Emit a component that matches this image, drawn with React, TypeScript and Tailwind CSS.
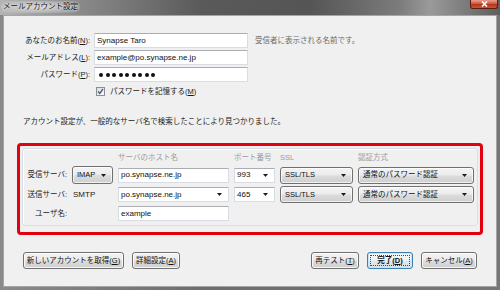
import type React from "react"

const Arrow = () => (
    <svg width="5" height="3" viewBox="0 0 5 3" className="shrink-0">
        <path d="M0 0h5L2.5 3z" fill="#1c1c1c" />
    </svg>
)

type BoxProps = {
    value: string
    w: string
    arrow?: boolean
}

// white edit box, optionally with the combo arrow on the right
const TextBox: React.FC<BoxProps> = ({ value, w, arrow }) => (
    <div className={"h-[15px] bg-white border border-[#d9dde3] border-t-[#abadb3] flex items-center justify-between pl-[2px] pr-[6px] text-[8px] text-[#111] " + w}>
        <span>{value}</span>
        {arrow && <Arrow />}
    </div>
)

type DropProps = {
    label: string
    w?: string
    h?: string
}

const Dropdown: React.FC<DropProps> = ({ label, w = "w-full", h = "h-[17px]" }) => (
    <div className={"rounded-[3px] border border-[#707070] bg-[linear-gradient(#f4f4f4,#ebebeb_48%,#dcdcdc_52%,#cfcfcf)] shadow-[inset_0_0_0_1px_rgba(255,255,255,0.7)] flex items-center justify-between pl-[4px] pr-[6px] text-[7.5px] text-[#111] " + w + " " + h}>
        <span>{label}</span>
        <Arrow />
    </div>
)

type BtnProps = {
    text: string
    keyChar: string
    w: string
    primary?: boolean
}

const Button: React.FC<BtnProps> = ({ text, keyChar, w, primary }) => (
    <div className={
        primary
            ? "h-[17px] rounded-[3px] border border-[#3c7fb1] bg-[linear-gradient(#f6f9fb,#eef3f6_48%,#e0e8ee_52%,#d6e0e7)] shadow-[inset_0_0_0_1px_#c4e6f8] p-[2px] " + w
            : "h-[17px] rounded-[3px] border border-[#707070] bg-[linear-gradient(#f2f2f2,#ebebeb_48%,#dddddd_52%,#cfcfcf)] shadow-[inset_0_0_0_1px_rgba(255,255,255,0.8)] " + w
    }>
        <div className={primary
            ? "h-full border border-dotted border-[#444] flex items-center justify-center text-[7.5px] font-bold text-[#111]"
            : "h-full flex items-center justify-center text-[7.5px] text-[#111]"}>
            {text}(<u className="underline-offset-1">{keyChar}</u>)
        </div>
    </div>
)

const FormRow: React.FC<{ label: string, keyChar: string, children: React.ReactNode, first?: boolean }> = ({ label, keyChar, children, first }) => (
    <div className={first ? "flex items-center gap-[4px] h-[15px]" : "flex items-center gap-[4px] h-[15px] mt-[2px]"}>
        <div className="w-[67px] text-right text-[7.5px] text-[#1a1a1a] whitespace-nowrap">
            {label}(<u className="underline-offset-1">{keyChar}</u>):
        </div>
        {children}
    </div>
)

const Label: React.FC<{ text: string }> = ({ text }) => (
    <div className="text-right text-[7.5px] text-[#1a1a1a] whitespace-nowrap">{text}</div>
)

const App: React.FC = () => {
    return (
        <div className="w-[500px] h-[290px] flex flex-col overflow-hidden bg-[linear-gradient(to_right,#8a8a8a,#6e6e6e_40%,#767676)] font-['Liberation_Sans','Noto_Sans_CJK_JP',sans-serif]">

            {/* title bar */}
            <div className="h-[15px] shrink-0 flex items-start justify-between bg-[linear-gradient(to_right,#b4b4b4,#8a8a8a_16%,#5a5a5a_40%,#555555_62%,#7c7c7c_80%,#9a9a9a_86%,#5e5e5e)]">
                <div className="ml-[1px] mt-[1px] px-[2px] rounded-[6px] bg-[radial-gradient(ellipse_at_center,rgba(235,235,235,0.75),rgba(235,235,235,0.2)_75%,rgba(235,235,235,0))] text-[7.5px] leading-[12px] text-[#111] [text-shadow:0_0_2px_#fff]">
                    メールアカウント設定
                </div>
                <div className="mr-[2px] w-[28px] h-[9px] rounded-b-[3px] border border-t-0 border-[#5b1d12] bg-[linear-gradient(#e3a08e,#cf5a3e_45%,#b8341a_55%,#c8553a)] flex items-center justify-center">
                    <svg width="7" height="6" viewBox="0 0 7 6">
                        <path d="M1 0.5l5 5M6 0.5l-5 5" stroke="#fff" strokeWidth="1.6" />
                    </svg>
                </div>
            </div>

            {/* client area */}
            <div className="flex-1 mx-[3px] mb-[3px] bg-[#f0f0f0] border border-[#a5a5a5] flex flex-col pl-[19px] pr-[19px] pt-[17px]">

                <FormRow label="あなたのお名前" keyChar="N" first>
                    <TextBox value="Synapse Taro" w="w-[154px]" />
                    <span className="ml-[3px] text-[7.5px] text-[#6b6b6b] whitespace-nowrap">受信者に表示される名前です。</span>
                </FormRow>
                <FormRow label="メールアドレス" keyChar="L">
                    <TextBox value="example@po.synapse.ne.jp" w="w-[154px]" />
                </FormRow>
                <FormRow label="パスワード" keyChar="P">
                    <div className="w-[154px] h-[15px] bg-white border border-[#d9dde3] border-t-[#abadb3] flex items-center gap-[2.5px] pl-[4px]">
                        {[0, 1, 2, 3, 4, 5, 6, 7, 8].map((i) => (
                            <div key={i} className="w-[4px] h-[4px] rounded-full bg-[#111]" />
                        ))}
                    </div>
                </FormRow>

                <div className="flex items-center h-[11px] mt-[4px] ml-[73px] gap-[5px]">
                    <div className="w-[9px] h-[9px] border border-[#8e8f8f] bg-[linear-gradient(135deg,#dcdcdc,#fdfdfd)] flex items-center justify-center">
                        <svg width="7" height="7" viewBox="0 0 7 7">
                            <path d="M1 3.6l1.8 1.9L6 1" fill="none" stroke="#4a5f86" strokeWidth="1.4" />
                        </svg>
                    </div>
                    <span className="text-[7.5px] text-[#1a1a1a]">パスワードを記憶する(<u className="underline-offset-1">M</u>)</span>
                </div>

                <div className="mt-[19px] h-[12px] leading-[12px] text-[7.5px] text-[#222] whitespace-nowrap">
                    アカウント設定が、一般的なサーバ名で検索したことにより見つかりました。
                </div>

                {/* server settings, marked in red */}
                <div className="mt-[15px] -ml-[6px] w-[466px] rounded-[4px] border-[3px] border-[#e3000f] pt-[2px] px-[2px] pb-[6px]">
                    <div className="rounded-[3px] border border-[#d5dfe5] shadow-[inset_1px_1px_0_#fff] pt-[1px] pb-[4px]">
                        <div className="grid grid-cols-[44px_41px_111px_41px_73px_116px] gap-x-[5px] h-[15px] items-center text-[7.5px] text-[#9a9a9a]">
                            <div />
                            <div />
                            <div>サーバのホスト名</div>
                            <div className="whitespace-nowrap">ポート番号</div>
                            <div>SSL</div>
                            <div>認証方式</div>
                        </div>
                        <div className="grid grid-cols-[44px_41px_111px_41px_73px_116px] gap-x-[5px] h-[17px] mt-[1px] items-center">
                            <Label text="受信サーバ:" />
                            <Dropdown label="IMAP" h="h-[18px]" />
                            <TextBox value="po.synapse.ne.jp" w="w-full" />
                            <TextBox value="993" w="w-full" arrow />
                            <Dropdown label="SSL/TLS" />
                            <Dropdown label="通常のパスワード認証" />
                        </div>
                        <div className="grid grid-cols-[44px_41px_111px_41px_73px_116px] gap-x-[5px] h-[17px] mt-[3px] items-center">
                            <Label text="送信サーバ:" />
                            <div className="pl-[1px] text-[8px] text-[#1a1a1a]">SMTP</div>
                            <TextBox value="po.synapse.ne.jp" w="w-full" arrow />
                            <TextBox value="465" w="w-full" arrow />
                            <Dropdown label="SSL/TLS" />
                            <Dropdown label="通常のパスワード認証" />
                        </div>
                        <div className="grid grid-cols-[44px_41px_111px_41px_73px_116px] gap-x-[5px] h-[15px] mt-[3px] items-center">
                            <Label text="ユーザ名:" />
                            <div />
                            <TextBox value="example" w="w-full" />
                        </div>
                    </div>
                </div>

                <div className="mt-[17px] flex justify-between">
                    <div className="flex gap-[8px]">
                        <Button text="新しいアカウントを取得" keyChar="G" w="w-[101px]" />
                        <Button text="詳細設定" keyChar="A" w="w-[48px]" />
                    </div>
                    <div className="flex gap-[8px]">
                        <Button text="再テスト" keyChar="T" w="w-[48px]" />
                        <Button text="完了" keyChar="D" w="w-[46px]" primary />
                        <Button text="キャンセル" keyChar="A" w="w-[56px]" />
                    </div>
                </div>
            </div>
        </div>
    )
}

export default App
